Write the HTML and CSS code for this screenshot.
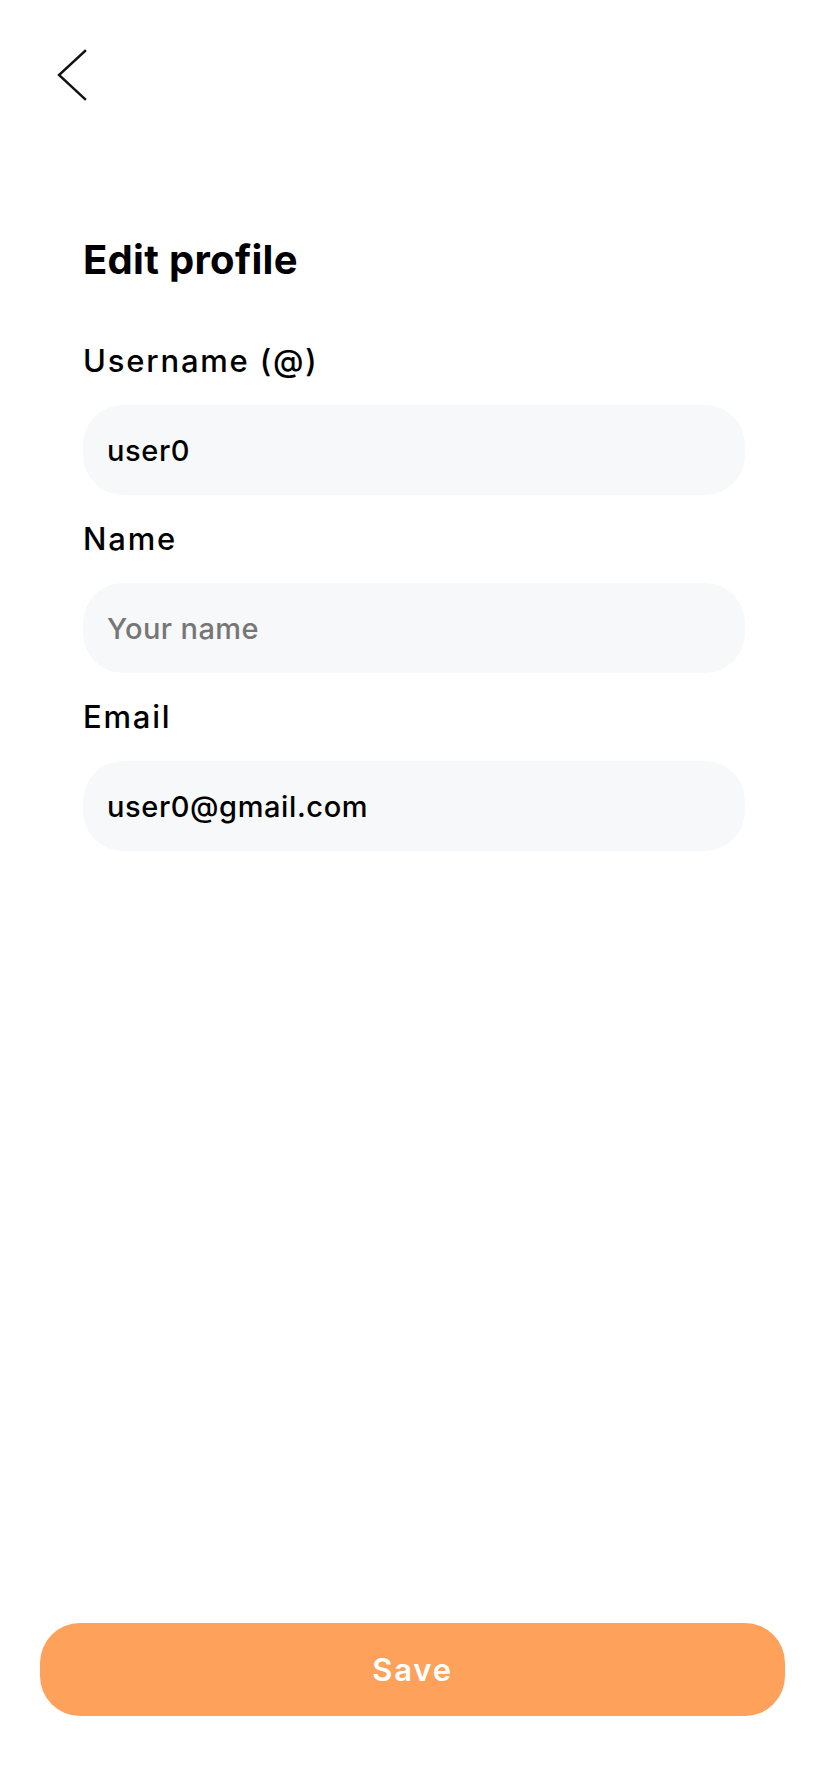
FILE: index.html
```html
<!DOCTYPE html>
<html lang="en">
<head>
<meta charset="utf-8">
<title>Edit profile</title>
<link rel="stylesheet" href="styles.css">
</head>
<body>
<div class="screen">
  <header class="topbar">
    <button class="back" aria-label="Back">
      <svg width="32" height="54" viewBox="0 0 32 54" fill="none" stroke="#111" stroke-width="2.4" stroke-linecap="square" stroke-linejoin="miter">
        <path d="M29 3 L3 27 L29 51"/>
      </svg>
    </button>
  </header>
  <main class="form">
    <h1 class="title">Edit profile</h1>
    <div class="field">
      <label class="label" for="username">Username (@)</label>
      <input class="input" id="username" type="text" value="user0">
    </div>
    <div class="field">
      <label class="label" for="name">Name</label>
      <input class="input" id="name" type="text" placeholder="Your name">
    </div>
    <div class="field">
      <label class="label" for="email">Email</label>
      <input class="input" id="email" type="email" value="user0@gmail.com">
    </div>
  </main>
  <footer class="footer">
    <button class="save">Save</button>
  </footer>
</div>
</body>
</html>
```

FILE: styles.css
```css
* { box-sizing: border-box; }
html, body { margin: 0; padding: 0; background: #fff; }
body { font-family: Inter, "Noto Sans", sans-serif; color: #000; }

.screen {
  width: 828px;
  height: 1792px;
  display: flex;
  flex-direction: column;
}

.topbar {
  padding: 48px 0 0 56px;
  height: 102px;
}
.back {
  display: block;
  padding: 0;
  margin: 0;
  border: none;
  background: none;
  width: 32px;
  height: 54px;
}
.back svg { display: block; }

.form {
  flex: 1;
  padding: 0 83px;
  display: flex;
  flex-direction: column;
  gap: 25px;
}

.title {
  margin: 134px 0 33px;
  font-size: 40px;
  line-height: 48px;
  font-weight: 700;
  letter-spacing: 0.3px;
}

.field {
  display: flex;
  flex-direction: column;
  gap: 25px;
}

.label {
  font-size: 31px;
  line-height: 38px;
  font-weight: 500;
  letter-spacing: 1.8px;
}

.input {
  width: 100%;
  height: 90px;
  border: none;
  outline: none;
  border-radius: 40px;
  background: #f7f8fa;
  padding: 0 24px;
  font-family: inherit;
  font-size: 29px;
  font-weight: 500;
  color: #000;
  letter-spacing: 0.6px;
}
.input::placeholder { color: #767676; opacity: 1; letter-spacing: 0.4px; }

.footer {
  padding: 0 43px 76px 40px;
}
.save {
  display: block;
  width: 100%;
  height: 93px;
  border: none;
  border-radius: 40px;
  background: #fea15a;
  color: #fff;
  font-family: inherit;
  font-size: 31px;
  font-weight: 600;
  letter-spacing: 1.8px;
}
```
